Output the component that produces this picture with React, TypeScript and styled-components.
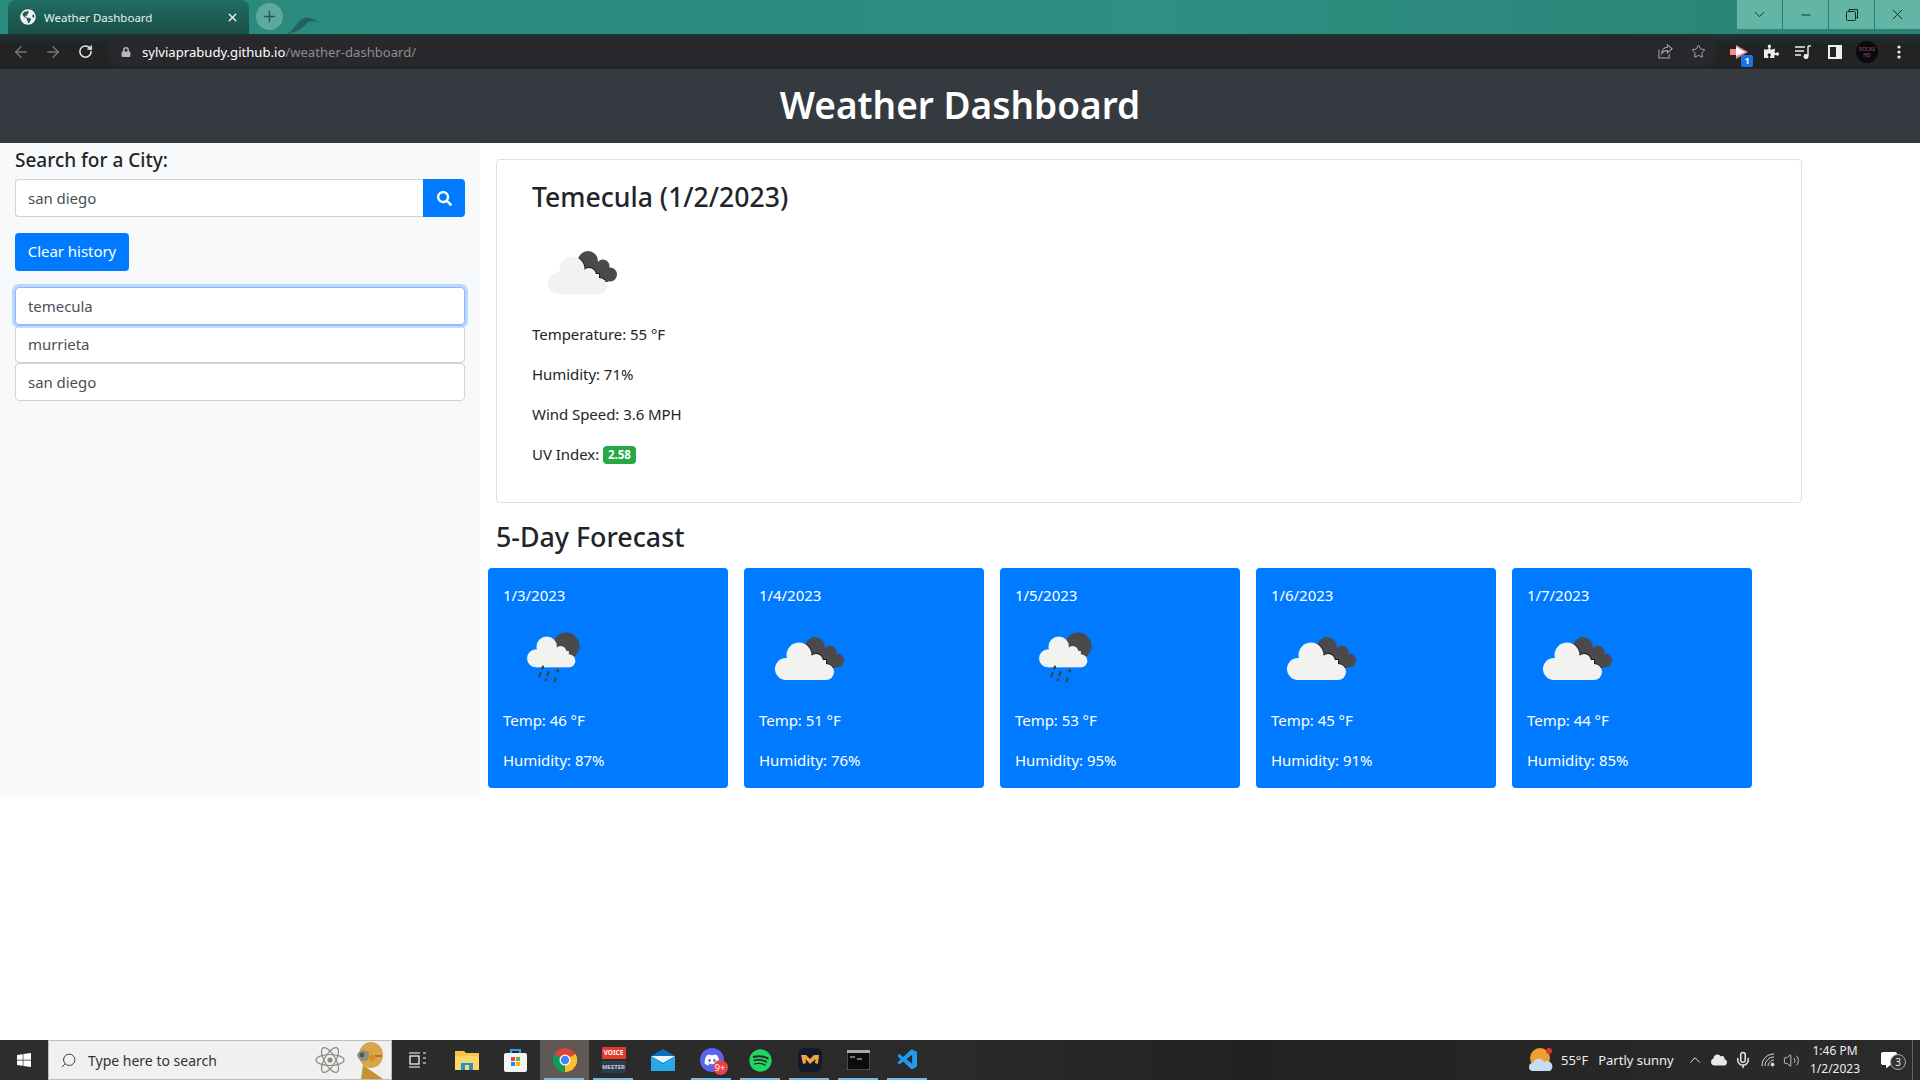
import React from 'react';
import styled, { createGlobalStyle } from 'styled-components';
import { ArrowLeft, ArrowRight, RotateCw, Star, ChevronUp, ChevronDown, Minus, X, Plus, Volume2, Mic, Search as SearchLine } from 'lucide-react';
import { FaSearch, FaGlobeAmericas, FaLock, FaPuzzlePiece, FaWindows, FaDiscord, FaSpotify, FaCloud, FaCommentAlt } from 'react-icons/fa';
import { VscVscode } from 'react-icons/vsc';

const FONT = `"Noto Sans", "Open Sans", "Liberation Sans", sans-serif`;

const Global = createGlobalStyle`
  html, body { margin: 0; padding: 0; background: #fff; }
  body { font-family: ${FONT}; font-size: 15px; letter-spacing: -0.05px; color: #212529; }
  * { box-sizing: border-box; }
`;

const Screen = styled.div`
  width: 1920px; height: 1080px; display: flex; flex-direction: column; overflow: hidden; background: #fff;
`;

/* browser chrome */
const TabStrip = styled.div`
  height: 34px; display: flex; align-items: flex-start; padding-left: 8px; flex: none;
  background: linear-gradient(90deg, #2b8a7e 0%, #2c8a7e 35%, #2f8f82 60%, #2a8276 100%);
`;
const Tab = styled.div`
  width: 241px; height: 34px; display: flex; align-items: center; padding: 0 10px 0 12px; gap: 8px;
  border-radius: 8px 8px 0 0; color: #e8f0ee; font-size: 11.5px; letter-spacing: 0; flex: none;
  background: linear-gradient(180deg, #1f6d62 0%, #1a4f48 100%);
`;
const TabTitle = styled.span`flex: 1; white-space: nowrap;`;
const NewTab = styled.div`
  width: 27px; height: 27px; margin: 3px 0 0 7px; border-radius: 50%; background: #5fa89f; color: #2a5a58;
  display: flex; align-items: center; justify-content: center; flex: none;
`;
const Bird = styled.svg`width: 40px; height: 20px; margin: 14px 0 0 2px; flex: none;`;
const WindowButtons = styled.div`margin-left: auto; display: flex; gap: 1px; background: #2a7f74;`;
const WindowButton = styled.div`
  width: 45px; height: 29px; background: #63b6a6; color: #102a26; display: flex; align-items: center; justify-content: center;
`;

const Toolbar = styled.div`
  height: 36px; flex: none; display: flex; align-items: center; padding: 0 5px;
  background: linear-gradient(180deg, #1f3431 0%, #222324 30%, #222324 100%); border-bottom: 1px solid #3a3c40;
`;
const NavSlot = styled.div<{ $dim?: boolean }>`
  width: 32px; height: 30px; display: flex; align-items: center; justify-content: center; flex: none;
  color: ${p => (p.$dim ? '#777' : '#e8e8e8')};
`;
const Omnibox = styled.div`
  flex: 1; height: 29px; margin: 0 6px 0 7px; border-radius: 15px; background: #28282c; display: flex; align-items: center;
  padding: 0 7px 0 13px; font-size: 13.1px; letter-spacing: 0; color: #8d8d8d; white-space: nowrap;
`;
const LockSlot = styled.span`width: 21px; display: flex; color: #b8b8b8; flex: none;`;
const UrlHost = styled.span`color: #fff;`;
const OmniRight = styled.div`margin-left: auto; display: flex; gap: 10px; color: #a9a9a9;`;
const OmniIcon = styled.div`width: 23px; display: flex; justify-content: center;`;
const ExtSlot = styled.div`
  width: 32px; height: 30px; display: flex; align-items: center; justify-content: center; color: #eee; position: relative; flex: none;
`;
const ExtBadge = styled.span`
  position: absolute; right: 2px; bottom: 0; width: 12px; height: 12px; background: #1a73e8; border-radius: 2px; color: #fff;
  font-size: 9px; font-weight: 700; line-height: 12px; text-align: center;
`;
const Avatar = styled.div`
  width: 22px; height: 22px; border-radius: 50%; background: #0a0a0a; font-size: 5px; line-height: 6px; text-align: center;
  color: #b04a8a; display: flex; align-items: center; justify-content: center;
`;

/* page */
const Header = styled.header`
  height: 73px; flex: none; background: #343a40; color: #fff; display: flex; align-items: center; justify-content: center;
`;
const PageTitle = styled.h1`margin: 0 0 4px; font-size: 37px; font-weight: 600; line-height: 48px; letter-spacing: 0;`;
const Content = styled.main`flex: 1; display: flex; align-items: flex-start; min-height: 0;`;
const Sidebar = styled.aside`
  width: 480px; height: 653px; flex: none; background: #f8f9fa; padding: 5px 15px 0;
`;
const SearchLabel = styled.h5`margin: 0 0 7px; font-size: 19px; font-weight: 500; line-height: 24px; color: #212529; letter-spacing: 0;`;
const SearchGroup = styled.div`display: flex; height: 38px; margin-bottom: 16px;`;
const SearchField = styled.div`
  flex: 1; background: #fff; border: 1px solid #ced4da; border-right: 0; border-radius: 4px 0 0 4px; padding: 0 12px;
  color: #495057; line-height: 37px;
`;
const SearchButton = styled.div`
  width: 42px; background: #007bff; color: #fff; border-radius: 0 4px 4px 0; display: flex; align-items: center; justify-content: center;
`;
const ClearButton = styled.div`
  width: 114px; height: 38px; margin-bottom: 16px; border-radius: 4px; background: #007bff; color: #fff; line-height: 37px; text-align: center;
`;
const HistoryItem = styled.div<{ $focus?: boolean }>`
  height: 38px; padding: 0 12px; background: #fff; color: #495057; line-height: 37px; border-radius: 4px; position: relative;
  border: 1px solid ${p => (p.$focus ? '#80bdff' : '#ced4da')};
  ${p => p.$focus && 'box-shadow: 0 0 0 3px rgba(0,123,255,.25); z-index: 1;'}
`;
const MainColumn = styled.section`flex: 1; padding: 16px 0 0 8px;`;
const CurrentCard = styled.div`
  width: 1306px; height: 344px; margin-left: 8px; border: 1px solid #dfdfdf; border-radius: 4px; padding: 20px 35px;
`;
const CityTitle = styled.h3`margin: 0 0 8px; font-size: 26.6px; font-weight: 500; line-height: 35px; height: 33.6px; letter-spacing: 0;`;
const IconBox = styled.svg`width: 100px; height: 100px; display: block;`;
const Detail = styled.p`margin: 0 0 16px; line-height: 24px;`;
const UvBadge = styled.span`
  display: inline-block; background: #28a745; color: #fff; border-radius: 4px; font-size: 11.5px; font-weight: 700;
  line-height: 12px; padding: 3px 5px; vertical-align: 1px; letter-spacing: 0;
`;
const ForecastTitle = styled.h3`margin: 16px 0 15px 8px; font-size: 26.8px; font-weight: 500; line-height: 35px; height: 33.6px; letter-spacing: 0;`;
const ForecastRow = styled.div`display: flex; gap: 16px;`;
const ForecastCard = styled.article`
  width: 240px; height: 220px; background: #007bff; color: #fff; border-radius: 4px; padding: 16px 15px 0; flex: none;
`;
const ForecastDate = styled.div`line-height: 23px; height: 24px;`;

/* taskbar */
const Taskbar = styled.footer`
  height: 40px; flex: none; display: flex; align-items: stretch; color: #fff;
  background: linear-gradient(90deg, #2e2d2d 0%, #2a2a2a 50%, #222 65%, #2c2b2b 100%);
`;
const StartButton = styled.div`width: 48px; display: flex; align-items: center; justify-content: center; flex: none;`;
const SearchBox = styled.div`
  width: 344px; flex: none; background: #f0f0f0; border: 1px solid #bdbdbd; display: flex; align-items: center; padding-left: 11px;
  color: #333; font-size: 14px; letter-spacing: 0; gap: 11px; position: relative; overflow: hidden;
`;
const SearchArt = styled.div`margin-left: auto; display: flex; align-items: center; gap: 8px; padding-right: 6px;`;
const Slot = styled.div<{ $w?: number; $active?: boolean; $run?: boolean }>`
  width: ${p => p.$w ?? 49}px; flex: none; display: flex; align-items: center; justify-content: center; position: relative;
  background: ${p => (p.$active ? '#5f5855' : 'transparent')};
  ${p => p.$run && `&::after { content: ''; position: absolute; left: 4px; right: 5px; bottom: 0; height: 2px; background: #76b9ed; }`}
`;
const VoiceStack = styled.div`width: 24px; display: flex; flex-direction: column; gap: 2px;`;
const VoiceTop = styled.div`
  height: 12px; background: #e5392c; color: #fff; font-size: 6.5px; font-weight: 700; line-height: 12px; text-align: center; letter-spacing: 0;
`;
const VoiceBottom = styled.div`
  height: 12px; background: #2b3d50; color: #c5cdd5; font-size: 6px; font-weight: 700; line-height: 12px; text-align: center; letter-spacing: 0;
`;
const BadgeWrap = styled.div`position: relative; width: 24px; height: 24px; display: flex;`;
const DiscordCircle = styled.div`
  width: 24px; height: 24px; border-radius: 50%; background: #5865f2; display: flex; align-items: center; justify-content: center;
`;
const DiscordBadge = styled.span`
  position: absolute; right: -4px; bottom: -3px; width: 15px; height: 15px; border-radius: 50%; background: #e8424c; color: #fff;
  font-size: 9px; line-height: 15px; text-align: center; letter-spacing: 0;
`;
const Tray = styled.div`margin-left: auto; display: flex; align-items: stretch; font-size: 13px; letter-spacing: 0;`;
const WeatherTile = styled.div`display: flex; align-items: center; width: 154px; flex: none; color: #eee; white-space: nowrap;`;
const WeatherTemp = styled.span`margin: 0 10px 0 8px;`;
const TraySlot = styled.div<{ $w: number }>`
  width: ${p => p.$w}px; flex: none; display: flex; align-items: center; justify-content: center; color: #e8e8e8;
`;
const Clock = styled.div`
  width: 66px; flex: none; display: flex; flex-direction: column; align-items: center; justify-content: center;
  font-size: 12px; line-height: 18px; color: #eee;
`;
const NotifSlot = styled.div`width: 41px; flex: none; display: flex; align-items: center; justify-content: center; position: relative;`;
const NotifBadge = styled.span`
  position: absolute; left: 22px; top: 14px; width: 16px; height: 16px; border-radius: 50%; border: 1px solid #aaa; background: #333;
  font-size: 10px; line-height: 14px; text-align: center; color: #eee;
`;
const DesktopEdge = styled.div`width: 8px; flex: none; margin-left: 3px; border-left: 1px solid #666;`;

const CloudShape = () => (
  <>
    <circle cx="27" cy="61" r="11" />
    <circle cx="40" cy="47" r="12.5" />
    <circle cx="57" cy="53" r="7" />
    <circle cx="67" cy="64" r="8" />
    <rect x="27" y="52" width="40" height="20" />
  </>
);

const BrokenClouds = ({ id }: { id: string }) => (
  <IconBox viewBox="0 0 100 100">
    <clipPath id={id}>
      <circle cx="56" cy="39" r="10" />
      <circle cx="71" cy="44" r="6.5" />
      <circle cx="78" cy="52.5" r="7" />
      <rect x="52" y="42" width="24" height="18" />
    </clipPath>
    <rect width="100" height="100" fill="#4a4a4d" clipPath={`url(#${id})`} />
    <g clipPath={`url(#${id})`} fill="#1c1c1f" stroke="#1c1c1f" strokeWidth="2"><CloudShape /></g>
    <g fill="#f2f2f1"><CloudShape /></g>
  </IconBox>
);

const RainCloud = () => (
  <IconBox viewBox="0 0 100 100">
    <circle cx="63" cy="38" r="13.5" fill="#4a4a4d" />
    <g transform="translate(10.9 0.3) scale(.82)" fill="#f2f2f1"><CloudShape /></g>
    <g stroke="#3f3f42" strokeWidth="2.2" strokeLinecap="round">
      <path d="M40 58.5 L39.5 60.5" />
      <path d="M37.5 65 L36.5 68.5" />
      <path d="M45.5 64 L44.5 67.5" />
      <path d="M55 62 L54.5 63.5" />
      <path d="M43 71.5 L42.8 72.5" />
      <path d="M52.5 70.5 L51.5 73.5" />
    </g>
  </IconBox>
);

const ChromeIcon = () => (
  <svg width="24" height="24" viewBox="0 0 48 48">
    <circle cx="24" cy="24" r="24" fill="#db4437" />
    <path d="M24 24 L45 12 A24 24 0 0 1 24 48 Z" fill="#fbc02d" />
    <path d="M24 24 L24 48 A24 24 0 0 1 3 12 Z" fill="#0f9d58" />
    <circle cx="24" cy="24" r="11" fill="#fff" />
    <circle cx="24" cy="24" r="8.5" fill="#4285f4" />
  </svg>
);

const forecast = [
  { date: '1/3/2023', temp: 46, hum: 87, rain: true },
  { date: '1/4/2023', temp: 51, hum: 76, rain: false },
  { date: '1/5/2023', temp: 53, hum: 95, rain: true },
  { date: '1/6/2023', temp: 45, hum: 91, rain: false },
  { date: '1/7/2023', temp: 44, hum: 85, rain: false },
];

export default function App() {
  return (
    <Screen>
      <Global />
      <TabStrip>
        <Tab>
          <FaGlobeAmericas size={16} color="#f0f0f0" />
          <TabTitle>Weather Dashboard</TabTitle>
          <X size={13} strokeWidth={2.5} />
        </Tab>
        <NewTab><Plus size={17} strokeWidth={2} /></NewTab>
        <Bird viewBox="0 0 40 20">
          <path d="M2 20 C10 16 12 6 20 4 C24 3 28 5 34 8 C28 7 24 7 22 9 C18 13 14 18 2 20 Z" fill="#24605c" />
        </Bird>
        <WindowButtons>
          <WindowButton><ChevronDown size={17} strokeWidth={1.3} /></WindowButton>
          <WindowButton><Minus size={14} strokeWidth={1.6} /></WindowButton>
          <WindowButton>
            <svg width="12" height="12" viewBox="0 0 12 12" fill="none" stroke="#102a26"><rect x=".5" y="2.5" width="9" height="9" rx="1" /><path d="M3 2.5V.5h8.5V9H9.5" /></svg>
          </WindowButton>
          <WindowButton><X size={17} strokeWidth={1.3} /></WindowButton>
        </WindowButtons>
      </TabStrip>

      <Toolbar>
        <NavSlot $dim><ArrowLeft size={18} /></NavSlot>
        <NavSlot $dim><ArrowRight size={18} /></NavSlot>
        <NavSlot><RotateCw size={15} strokeWidth={2.4} /></NavSlot>
        <Omnibox>
          <LockSlot><FaLock size={10} /></LockSlot>
          <UrlHost>sylviaprabudy.github.io</UrlHost>/weather-dashboard/
          <OmniRight>
            <OmniIcon>
              <svg width="15" height="15" viewBox="0 0 16 16" fill="none" stroke="#a9a9a9" strokeWidth="1.1"><path d="M1 6v9h11V11" /><path d="M15 5 10 1v2.500C6 3.500 4 7 4 10c1.500-2.500 3.500-3 6-3v2.500z" /></svg>
            </OmniIcon>
            <OmniIcon><Star size={15} strokeWidth={1.6} /></OmniIcon>
          </OmniRight>
        </Omnibox>
        <ExtSlot>
          <svg width="18" height="14" viewBox="0 0 18 14"><path d="M0 4h6V0l12 7L6 14v-4H0z" fill="#f58a8a" /><path d="M6 2l9 5-9 4z" fill="#fff" /></svg>
          <ExtBadge>1</ExtBadge>
        </ExtSlot>
        <ExtSlot><FaPuzzlePiece size={15} /></ExtSlot>
        <ExtSlot>
          <svg width="16" height="14" viewBox="0 0 16 14" fill="none" stroke="#eee" strokeWidth="1.4"><path d="M0 2h10M0 6h9M0 10h6" /><path d="M13 1v10" /><circle cx="11" cy="11.500" r="1.800" fill="#eee" /><path d="M13 1h3" /></svg>
        </ExtSlot>
        <ExtSlot>
          <svg width="14" height="14" viewBox="0 0 14 14"><path d="M0 0h14v14H0z" fill="#eee" /><path d="M2 2h6v10H2z" fill="#222324" /></svg>
        </ExtSlot>
        <ExtSlot><Avatar>ROCKS<br />HD</Avatar></ExtSlot>
        <ExtSlot>
          <svg width="4" height="14" viewBox="0 0 4 14" fill="#eee"><circle cx="2" cy="2" r="1.600" /><circle cx="2" cy="7" r="1.600" /><circle cx="2" cy="12" r="1.600" /></svg>
        </ExtSlot>
      </Toolbar>

      <Header><PageTitle>Weather Dashboard</PageTitle></Header>

      <Content>
        <Sidebar>
          <SearchLabel>Search for a City:</SearchLabel>
          <SearchGroup>
            <SearchField>san diego</SearchField>
            <SearchButton><FaSearch size={15} /></SearchButton>
          </SearchGroup>
          <ClearButton>Clear history</ClearButton>
          <HistoryItem $focus>temecula</HistoryItem>
          <HistoryItem>murrieta</HistoryItem>
          <HistoryItem>san diego</HistoryItem>
        </Sidebar>
        <MainColumn>
          <CurrentCard>
            <CityTitle>Temecula (1/2/2023)</CityTitle>
            <BrokenClouds id="cloud-main" />
            <Detail>Temperature: 55 °F</Detail>
            <Detail>Humidity: 71%</Detail>
            <Detail>Wind Speed: 3.6 MPH</Detail>
            <Detail>UV Index: <UvBadge>2.58</UvBadge></Detail>
          </CurrentCard>
          <ForecastTitle>5-Day Forecast</ForecastTitle>
          <ForecastRow>
            {forecast.map(d => (
              <ForecastCard key={d.date}>
                <ForecastDate>{d.date}</ForecastDate>
                {d.rain ? <RainCloud /> : <BrokenClouds id={`cloud-${d.temp}`} />}
                <Detail>Temp: {d.temp} °F</Detail>
                <Detail>Humidity: {d.hum}%</Detail>
              </ForecastCard>
            ))}
          </ForecastRow>
        </MainColumn>
      </Content>

      <Taskbar>
        <StartButton><FaWindows size={16} /></StartButton>
        <SearchBox>
          <SearchLine size={17} strokeWidth={1.3} style={{ transform: 'scaleX(-1)' }} />
          Type here to search
          <SearchArt>
            <svg width="30" height="30" viewBox="0 0 30 30" fill="none" stroke="#8a8a80" strokeWidth="1.2">
              <ellipse cx="15" cy="15" rx="14" ry="5.500" />
              <ellipse cx="15" cy="15" rx="14" ry="5.500" transform="rotate(60 15 15)" />
              <ellipse cx="15" cy="15" rx="14" ry="5.500" transform="rotate(120 15 15)" />
              <circle cx="15" cy="15" r="2" fill="#8a8a80" />
            </svg>
            <svg width="32" height="38" viewBox="0 0 32 38">
              <path d="M10 24 L30 38 H8 Z" fill="#c8912f" />
              <ellipse cx="18" cy="14" rx="12" ry="13" fill="#d9a54a" />
              <path d="M4 14 C6 8 13 8 16 12 L15 19 C10 21 6 20 4 14Z" fill="#8f8f84" />
              <circle cx="9" cy="14" r="2.400" fill="#555" />
              <circle cx="19" cy="17" r="3" fill="#e08a1e" />
              <path d="M22 15h7" stroke="#6b5222" strokeWidth="1" />
            </svg>
          </SearchArt>
        </SearchBox>
        <Slot $w={50}>
          <svg width="17" height="16" viewBox="0 0 17 16" fill="none" stroke="#fff" strokeWidth="1.200"><path d="M0 1h11M0 15h11" /><rect x="1" y="4" width="9" height="8" /><path d="M14 1h3M14 6h3M14 11h3" /></svg>
        </Slot>
        <Slot>
          <svg width="24" height="20" viewBox="0 0 24 20"><path d="M0 1h9l2 2h13v17H0z" fill="#f4c54d" /><path d="M0 6h24v14H0z" fill="#fbd768" /><path d="M6 13h12v7H6z" fill="#1f8fe0" /><path d="M10 15h4v5h-4z" fill="#fbd768" /></svg>
        </Slot>
        <Slot>
          <svg width="23" height="24" viewBox="0 0 23 24"><path d="M7 5V2h9v3" fill="none" stroke="#2aa6e8" strokeWidth="2" /><rect y="5" width="23" height="19" rx="2" fill="#f4f4f4" /><path d="M7 9h4v4H7z" fill="#e8452f" /><path d="M12 9h4v4h-4z" fill="#6cb33f" /><path d="M7 14h4v4H7z" fill="#1e90e0" /><path d="M12 14h4v4h-4z" fill="#f7b500" /></svg>
        </Slot>
        <Slot $active $run><ChromeIcon /></Slot>
        <Slot $run>
          <VoiceStack><VoiceTop>VOICE</VoiceTop><VoiceBottom>MEETER</VoiceBottom></VoiceStack>
        </Slot>
        <Slot>
          <svg width="24" height="22" viewBox="0 0 24 22"><path d="M0 7 12 0l12 7v15H0z" fill="#0f6cbd" /><path d="M0 7h24L12 14z" fill="#e8f4fb" /><path d="M0 7l12 8 12-8v15H0z" fill="#29a8ea" /></svg>
        </Slot>
        <Slot $run>
          <BadgeWrap>
            <DiscordCircle><FaDiscord size={16} color="#fff" /></DiscordCircle>
            <DiscordBadge>9+</DiscordBadge>
          </BadgeWrap>
        </Slot>
        <Slot $run><FaSpotify size={23} color="#1ed760" /></Slot>
        <Slot $run>
          <svg width="24" height="24" viewBox="0 0 24 24"><rect width="24" height="24" rx="6" fill="#141a2e" /><path d="M3 7l5 0 4 4 4-4 5 0-1 9-3-1 .5-4L12 16 7.500 11 8 15l-3 1z" fill="#f0a63c" /></svg>
        </Slot>
        <Slot $run>
          <svg width="23" height="20" viewBox="0 0 23 20"><rect width="23" height="20" fill="#0c0c0c" stroke="#888" /><rect width="23" height="3" fill="#aaa" /><path d="M3 7h5M10 9h5" stroke="#ddd" strokeWidth="1.200" /></svg>
        </Slot>
        <Slot $run><VscVscode size={24} color="#1f9cf0" /></Slot>
        <Tray>
          <WeatherTile>
            <svg width="24" height="26" viewBox="0 0 24 26">
              <circle cx="11" cy="11" r="10" fill="#f0a030" />
              <circle cx="20" cy="4" r="3" fill="#d9362b" />
              <path d="M4 24a4 4 0 0 1 0-8 6 6 0 0 1 11-1 5 5 0 0 1 6 9z" fill="#c5dcf2" />
            </svg>
            <WeatherTemp>55°F</WeatherTemp>Partly sunny
          </WeatherTile>
          <TraySlot $w={24}><ChevronUp size={18} strokeWidth={1.300} /></TraySlot>
          <TraySlot $w={24}><FaCloud size={16} /></TraySlot>
          <TraySlot $w={24}><Mic size={18} /></TraySlot>
          <TraySlot $w={25}>
            <svg width="14" height="14" viewBox="0 0 14 14" fill="none" stroke="#ddd" strokeWidth="1"><path d="M1 13C1 6 6 1 13 1" /><path d="M4 13c0-5 4-9 9-9" /><path d="M7 13c0-3 3-6 6-6" /><circle cx="11.500" cy="11.500" r="1.500" fill="#ddd" /></svg>
          </TraySlot>
          <TraySlot $w={22}><Volume2 size={17} strokeWidth={1.100} /></TraySlot>
          <Clock><span>1:46 PM</span><span>1/2/2023</span></Clock>
          <NotifSlot>
            <FaCommentAlt size={16} />
            <NotifBadge>3</NotifBadge>
          </NotifSlot>
          <DesktopEdge />
        </Tray>
      </Taskbar>
    </Screen>
  );
}
